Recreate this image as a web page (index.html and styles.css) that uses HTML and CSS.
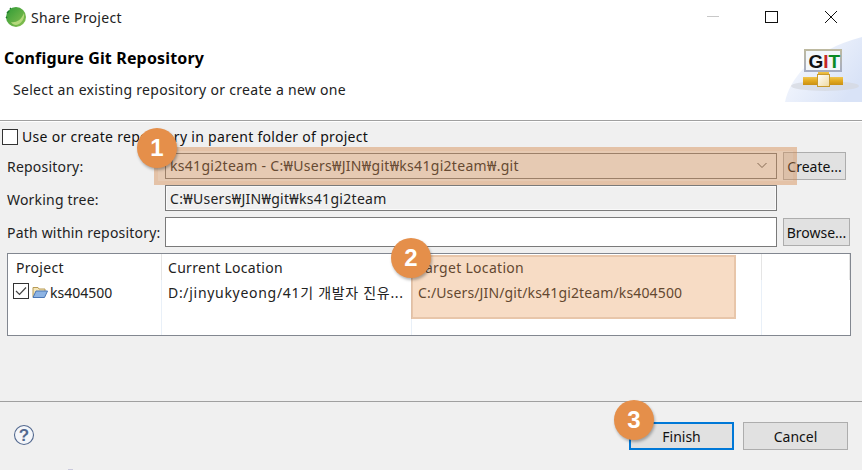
FILE: index.html
```html
<!DOCTYPE html>
<html lang="ko">
<head>
<meta charset="utf-8">
<title>Share Project</title>
<link rel="stylesheet" href="styles.css">
</head>
<body>
<div class="dialog">
  <div class="titlebar">
    <svg class="app-icon" width="22" height="22" viewBox="0 0 22 22">
      <defs><linearGradient id="leaf" x1="0" y1="0" x2="1" y2="1"><stop offset="0" stop-color="#2f9a35"/><stop offset="1" stop-color="#8cc152"/></linearGradient></defs>
      <circle cx="11" cy="11" r="10" fill="url(#leaf)"/>
      <path d="M6 16C10 17 16 15 19 7C20 12 17 18 11 19C9 19 7 18 6 16Z" fill="#b5d97c"/>
      <path d="M4 5L2 7M6 2L5 3M2 11L1 12" stroke="#1d7a2c" stroke-width="1.5"/>
    </svg>
    <span class="title">Share Project</span>
    <div class="win-buttons">
      <svg width="14" height="14" viewBox="0 0 14 14"><path d="M1 6.5H13" stroke="#c8c8c8" stroke-width="1"/></svg>
      <svg width="14" height="14" viewBox="0 0 14 14"><rect x="0.5" y="1.5" width="12" height="11" fill="none" stroke="#111" stroke-width="1"/></svg>
      <svg width="14" height="14" viewBox="0 0 14 14"><path d="M1 1L13 13M13 1L1 13" stroke="#111" stroke-width="1"/></svg>
    </div>
  </div>
  <header class="banner">
    <div class="banner-text">
      <h1>Configure Git Repository</h1>
      <p>Select an existing repository or create a new one</p>
    </div>
    <svg class="git-art" width="77" height="67" viewBox="0 0 77 67">
      <defs>
        <linearGradient id="sky" x1="0" y1="0" x2="1" y2="0.6"><stop offset="0" stop-color="#fbfcff"/><stop offset="1" stop-color="#d9e3f7"/></linearGradient>
        <linearGradient id="pipe" x1="0" y1="0" x2="0" y2="1"><stop offset="0" stop-color="#f0c650"/><stop offset="0.5" stop-color="#e2a81e"/><stop offset="1" stop-color="#c98f14"/></linearGradient>
        <linearGradient id="joint" x1="0" y1="0" x2="1" y2="1"><stop offset="0" stop-color="#fff"/><stop offset="1" stop-color="#eed9a0"/></linearGradient>
        <linearGradient id="frame" x1="0" y1="0" x2="0" y2="1"><stop offset="0" stop-color="#bdb9a0"/><stop offset="1" stop-color="#a6adc2"/></linearGradient>
      </defs>
      <path d="M0 66C4 45 25 14 77 1V66Z" fill="url(#sky)"/>
      <ellipse cx="40" cy="50" rx="34" ry="5" fill="#d4d7de" opacity=".7"/>
      <rect x="20" y="14" width="36" height="21" fill="#f3f7fb" stroke="url(#frame)" stroke-width="2"/>
      <text class="git-text" x="23.5" y="32"><tspan fill="#111">G</tspan><tspan fill="#c62828">I</tspan><tspan fill="#0a8a24">T</tspan></text>
      <rect x="33" y="36" width="11" height="6" fill="url(#pipe)"/>
      <rect x="18" y="41" width="40" height="8" fill="url(#pipe)"/>
      <rect x="32.5" y="38.5" width="12" height="12" fill="url(#joint)" stroke="#c89a2e"/>
    </svg>
  </header>
  <main class="form">
    <label class="use-parent"><span class="check"></span>Use or create repository in parent folder of project</label>
    <div class="fields">
      <span class="field-label">Repository:</span>
      <div class="control combo"><span>ks41gi2team - C:₩Users₩JIN₩git₩ks41gi2team₩.git</span>
        <svg width="12" height="7" viewBox="0 0 12 7"><path d="M1.5 1L6 5.5L10.5 1" fill="none" stroke="#555" stroke-width="1"/></svg>
      </div>
      <button class="btn create">Create...</button>
      <span class="field-label low">Working tree:</span>
      <div class="control readonly">C:₩Users₩JIN₩git₩ks41gi2team</div>
      <span></span>
      <span class="field-label">Path within repository:</span>
      <div class="control path"></div>
      <button class="btn browse">Browse...</button>
    </div>
    <div class="table">
      <div class="th first">Project</div>
      <div class="th">Current Location</div>
      <div class="th">Target Location</div>
      <div class="th"></div>
      <div class="td first">
        <span class="check small"><svg width="12" height="10" viewBox="0 0 12 10"><path d="M1 5L4.5 8.5L11 1.5" fill="none" stroke="#444" stroke-width="1.2"/></svg></span>
        <svg class="folder" width="16" height="14" viewBox="0 0 16 14"><path d="M1 12V2.5H6L7 4H13V6" fill="#f5e6b8" stroke="#b79a55"/><path d="M1 12.5L4 6H15.5L12.5 12.5Z" fill="#8db4e4" stroke="#4a76b4"/></svg>
        <span>ks404500</span>
      </div>
      <div class="td"><span class="clip">D:/jinyukyeong/41기 개발자 진유...</span></div>
      <div class="td target">C:/Users/JIN/git/ks41gi2team/ks404500</div>
      <div class="td"></div>
    </div>
  </main>
  <footer class="actions">
    <svg class="help" width="22" height="22" viewBox="0 0 22 22">
      <circle cx="11" cy="11" r="9.5" fill="#f4f6fa" stroke="#53698f" stroke-width="1.1"/>
      <text class="help-text" x="11" y="17">?</text>
    </svg>
    <button class="btn wide primary">Finish</button>
    <button class="btn wide">Cancel</button>
  </footer>
  <div class="mark mark-repo"></div>
  <div class="mark mark-target"></div>
  <div class="step step-1">1</div>
  <div class="step step-2">2</div>
  <div class="step step-3">3</div>
  <div class="crop-mark"></div>
</div>
</body>
</html>
```
FILE: styles.css
```css
* { box-sizing: border-box; }
html, body { margin: 0; padding: 0; }
body {
  width: 862px;
  height: 470px;
  overflow: hidden;
  font-family: "Noto Sans", "Noto Sans CJK KR", sans-serif;
  font-size: 14px;
  letter-spacing: 0.3px;
  color: #111;
}
.dialog {
  position: relative;
  width: 862px;
  height: 470px;
  background: #f0f0f0;
  display: flex;
  flex-direction: column;
}
.titlebar {
  height: 36px;
  background: #fff;
  display: flex;
  align-items: center;
  padding-left: 5px;
  flex: none;
}
.app-icon { margin: -2px 4px 0 0; }
.title { color: #222; font-size: 14px; margin-top: -2px; }
.win-buttons {
  margin-left: auto;
  display: flex;
  gap: 45px;
  padding-right: 24px;
  margin-top: -2px;
}
.banner {
  height: 85px;
  background: #fff;
  border-bottom: 1px solid #a0a0a0;
  box-shadow: 0 1px 0 #fff;
  display: flex;
  justify-content: space-between;
  flex: none;
}
.banner-text { padding-left: 4px; }
.banner h1 {
  margin: 11px 0 0;
  font-size: 16px;
  line-height: 22px;
  font-weight: 700;
  letter-spacing: 0.15px;
  color: #000;
}
.banner p {
  margin: 11px 0 0 9px;
  font-size: 14px;
  line-height: 20px;
  color: #222;
}
.git-art { align-self: flex-start; }
.git-text {
  font-family: "Liberation Sans", sans-serif;
  font-size: 19px;
  font-weight: 700;
  letter-spacing: 0;
}
.form {
  flex: 1;
  margin-top: 1px;
  padding: 7px 12px 0 2px;
  display: flex;
  flex-direction: column;
}
.use-parent {
  display: flex;
  align-items: center;
  gap: 4px;
  height: 16px;
  line-height: 16px;
}
.check {
  width: 16px;
  height: 16px;
  flex: none;
  background: #fff;
  border: 1px solid #333;
  display: inline-flex;
  align-items: center;
  justify-content: center;
}
.fields {
  margin-top: 8px;
  display: grid;
  grid-template-columns: 158px 612px auto;
  grid-template-rows: 26px 26px 30px;
  row-gap: 6px;
  padding-left: 5px;
  align-items: center;
}
.field-label {
  line-height: 20px;
  color: #222;
  letter-spacing: 0.2px;
  padding-top: 2px;
}
.field-label.low { padding-top: 4px; }
.control {
  height: 100%;
  display: flex;
  align-items: center;
  padding-left: 4px;
  background: #fff;
  border: 1px solid #7a7a7a;
  color: #222;
}
.combo {
  background: #f0f0f0;
  justify-content: space-between;
  padding: 0 8px 2px 4px;
}
.readonly {
  background: #f0f0f0;
  box-shadow: inset 0 0 0 1px #fafafa;
  padding-top: 1px;
}
.btn {
  font: inherit;
  letter-spacing: 0;
  color: #111;
  background: #e1e1e1;
  border: 1px solid #adadad;
  padding: 0;
  margin-left: 6px;
  height: 28px;
}
.create { width: 63px; }
.browse { width: 67px; }
.table {
  margin: 6px 0 0 5px;
  width: 844px;
  height: 83px;
  background: #fff;
  border: 1px solid #828790;
  display: grid;
  grid-template-columns: 154px 250px 350px 1fr;
  grid-template-rows: 26px 1fr;
  flex: none;
}
.th, .td {
  padding-left: 6px;
  border-right: 1px solid #e9f0f8;
  white-space: nowrap;
  overflow: hidden;
}
.th { line-height: 27px; color: #222; border-right-color: #e5e5e5; }
.th:last-child, .td:last-child { border-right: 0; }
.th.first { padding-left: 8px; }
.td { line-height: 26px; color: #222; }
.td.target { letter-spacing: 0.14px; }
.td.first {
  padding-left: 5px;
  display: flex;
  align-items: flex-start;
}
.td.first > span:last-child { margin-left: 2px; letter-spacing: 0; }
.clip { letter-spacing: 0.7px; }
.check.small { margin-top: 3px; }
.folder { margin: 5px 0 0 3px; }
.actions {
  flex: none;
  height: 69px;
  border-top: 1px solid #a0a0a0;
  display: flex;
  align-items: flex-start;
  padding: 20px 14px 0 13px;
}
.help { margin-top: 2px; margin-right: auto; }
.help-text {
  font-family: "Liberation Sans", sans-serif;
  font-size: 17px;
  font-weight: 700;
  fill: #53698f;
  text-anchor: middle;
}
.btn.wide { width: 105px; margin: 0 0 0 9px; height: 28px; }
.btn.primary { border: 2px solid #0078d7; }
.mark { position: absolute; }
.mark-repo {
  left: 154px;
  top: 147px;
  width: 643px;
  height: 38px;
  background: rgba(214, 140, 80, 0.38);
  border: 4px solid rgba(214, 140, 80, 0.12);
}
.mark-target {
  left: 411px;
  top: 255px;
  width: 325px;
  height: 64px;
  background: rgba(232, 148, 80, 0.33);
  border: 2px solid rgba(200, 150, 110, 0.3);
}
.step {
  position: absolute;
  width: 40px;
  height: 40px;
  border-radius: 50%;
  background: #e58f4a;
  color: #fff;
  font-family: "Liberation Sans", sans-serif;
  font-size: 24px;
  font-weight: 700;
  line-height: 40px;
  letter-spacing: 0;
  text-align: center;
  box-shadow: 1px 2px 3px rgba(0, 0, 0, 0.3);
}
.step-1 { left: 137px; top: 128px; }
.step-2 { left: 391px; top: 238px; }
.step-3 { left: 614px; top: 400px; }
.crop-mark {
  position: absolute;
  left: 68px;
  top: 469px;
  width: 5px;
  height: 1px;
  background: #c9c9dc;
}
```
